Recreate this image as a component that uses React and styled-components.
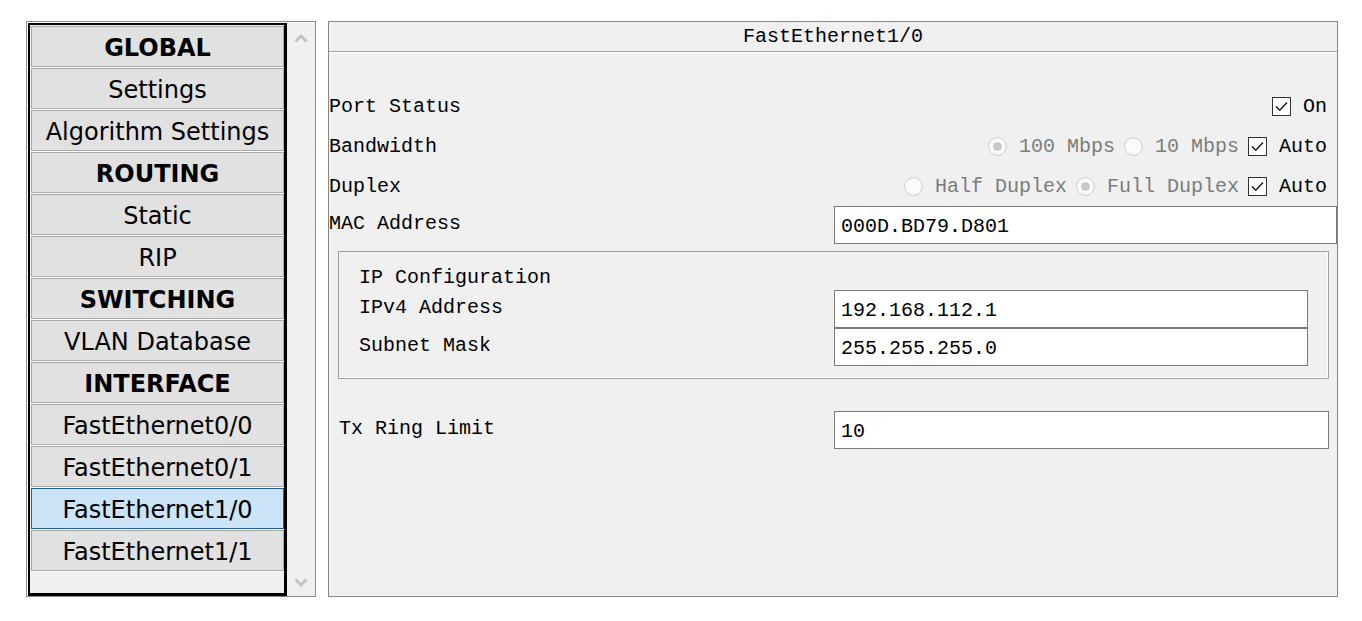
import React from "react";
import styled, { createGlobalStyle } from "styled-components";

const GlobalStyle = createGlobalStyle`
    html, body {
        margin: 0;
        background: #ffffff;
    }
    * {
        box-sizing: border-box;
    }
`;

const Page = styled.div`
    display: flex;
    gap: 12px;
    padding: 21px 0 0 26px;
`;

/* ---------- left navigation ---------- */

const NavBox = styled.div`
    display: flex;
    width: 290px;
    height: 576px;
    border: 1px solid #8a8a8a;
    background: #ffffff;
    padding: 1px 0 0 1px;
`;

const NavList = styled.div`
    width: 259px;
    display: flex;
    flex-direction: column;
    border-style: solid;
    border-color: #000;
    border-width: 2px 3px 3px 2px;
    background: #f0f0f0;
    padding: 1px 0 0 1px;
`;

const NavItem = styled.div`
    height: 41px;
    width: 253px;
    margin-bottom: 1px;
    display: flex;
    align-items: center;
    justify-content: center;
    padding-top: 3px;
    font-family: "DejaVu Sans", Verdana, sans-serif;
    font-size: 24px;
    font-weight: ${(p) => (p.$heading ? 700 : 400)};
    color: #000;
    background: ${(p) => (p.$active ? "#cce4f7" : "#e1e1e1")};
    border: 1px solid ${(p) => (p.$active ? "#1f5e9c" : "#a9a9a9")};
    box-shadow: 0 1px 0 #ffffff;
`;

const ScrollBar = styled.div`
    flex: 1;
    display: flex;
    flex-direction: column;
    justify-content: space-between;
    align-items: center;
    background: #f0f0f0;
    padding: 11px 0 9px 0;
`;

const Chevron = ({ down }) => (
    <svg width="14" height="9" viewBox="0 0 14 9">
        <path
            d={down ? "M1.5 1.5 L7 7 L12.5 1.5" : "M1.5 7.5 L7 2 L12.5 7.5"}
            stroke="#c3c3c3"
            strokeWidth="3"
            fill="none"
        />
    </svg>
);

/* ---------- right config panel ---------- */

const Panel = styled.div`
    width: 1010px;
    height: 576px;
    border: 1px solid #868686;
    background: #f0f0f0;
    font-family: "Liberation Mono", "Courier New", monospace;
    font-size: 20px;
    color: #000;
`;

const TitleBar = styled.div`
    height: 30px;
    line-height: 29px;
    text-align: center;
    border-bottom: 1px solid #a0a0a0;
    box-shadow: 0 1px 0 #ffffff;
`;

const Body = styled.div`
    padding-top: 34px;
    display: flex;
    flex-direction: column;
`;

const OptionRow = styled.div`
    height: 40px;
    display: flex;
    align-items: center;
    justify-content: space-between;
    padding: 1px 10px 0 0;
`;

const Label = styled.span`
    white-space: pre;
    transform: translateY(${(p) => p.$shift || 0}px);
`;

const Options = styled.div`
    display: flex;
    align-items: center;
`;

const Option = styled.div`
    display: flex;
    align-items: center;
    gap: 12px;
    margin-left: 9px;
    color: ${(p) => (p.$disabled ? "#7c7c7c" : "#000")};
    white-space: pre;
`;

const FieldRow = styled.div`
    display: flex;
    align-items: center;
    justify-content: space-between;
    margin: ${(p) => p.$margin || "0"};
`;

const Field = styled.div`
    width: ${(p) => p.$width}px;
    height: 38px;
    border: 1px solid #7a7a7a;
    background: #ffffff;
    padding: 3px 0 0 6px;
    display: flex;
    align-items: center;
    white-space: pre;
`;

const GroupBox = styled.div`
    margin: 7px 8px 0 9px;
    height: 128px;
    border: 1px solid #a0a0a0;
    box-shadow: inset -1px -1px 0 #ffffff;
    padding: 16px 20px 0 20px;
`;

const GroupTitle = styled.div`
    height: 20px;
    line-height: 20px;
    margin-bottom: 2px;
`;

const CheckBox = () => (
    <svg width="19" height="19" viewBox="0 0 19 19">
        <rect x="0.5" y="0.5" width="18" height="18" fill="#fff" stroke="#333" />
        <path d="M4 9.5 L7.8 13.2 L15 5.5" stroke="#222" strokeWidth="1.6" fill="none" />
    </svg>
);

const Radio = ({ checked }) => (
    <svg width="19" height="19" viewBox="0 0 20 20">
        <circle cx="10" cy="10" r="9.3" fill="#fbfbfb" stroke="#c9c9c9" />
        {checked && <circle cx="10" cy="10" r="4.6" fill="#c6c6c6" />}
    </svg>
);

const navItems = [
    { label: "GLOBAL", heading: true },
    { label: "Settings" },
    { label: "Algorithm Settings" },
    { label: "ROUTING", heading: true },
    { label: "Static" },
    { label: "RIP" },
    { label: "SWITCHING", heading: true },
    { label: "VLAN Database" },
    { label: "INTERFACE", heading: true },
    { label: "FastEthernet0/0" },
    { label: "FastEthernet0/1" },
    { label: "FastEthernet1/0", active: true },
    { label: "FastEthernet1/1" },
];

const App = () => {
    return (
        <>
            <GlobalStyle />
            <Page>
                <NavBox>
                    <NavList>
                        {navItems.map((item) => (
                            <NavItem
                                key={item.label}
                                $heading={item.heading}
                                $active={item.active}
                            >
                                {item.label}
                            </NavItem>
                        ))}
                    </NavList>
                    <ScrollBar>
                        <Chevron />
                        <Chevron down />
                    </ScrollBar>
                </NavBox>

                <Panel>
                    <TitleBar>FastEthernet1/0</TitleBar>
                    <Body>
                        <OptionRow>
                            <Label>Port Status</Label>
                            <Options>
                                <Option>
                                    <CheckBox />
                                    On
                                </Option>
                            </Options>
                        </OptionRow>
                        <OptionRow>
                            <Label>Bandwidth</Label>
                            <Options>
                                <Option $disabled>
                                    <Radio checked />
                                    100 Mbps
                                </Option>
                                <Option $disabled>
                                    <Radio />
                                    10 Mbps
                                </Option>
                                <Option>
                                    <CheckBox />
                                    Auto
                                </Option>
                            </Options>
                        </OptionRow>
                        <OptionRow>
                            <Label>Duplex</Label>
                            <Options>
                                <Option $disabled>
                                    <Radio />
                                    Half Duplex
                                </Option>
                                <Option $disabled>
                                    <Radio checked />
                                    Full Duplex
                                </Option>
                                <Option>
                                    <CheckBox />
                                    Auto
                                </Option>
                            </Options>
                        </OptionRow>

                        <FieldRow>
                            <Label $shift={-2}>MAC Address</Label>
                            <Field $width={503}>000D.BD79.D801</Field>
                        </FieldRow>

                        <GroupBox>
                            <GroupTitle>IP Configuration</GroupTitle>
                            <FieldRow>
                                <Label $shift={-2}>IPv4 Address</Label>
                                <Field $width={474}>192.168.112.1</Field>
                            </FieldRow>
                            <FieldRow>
                                <Label $shift={-2}>Subnet Mask</Label>
                                <Field $width={474}>255.255.255.0</Field>
                            </FieldRow>
                        </GroupBox>

                        <FieldRow $margin="32px 8px 0 10px">
                            <Label $shift={-2}>Tx Ring Limit</Label>
                            <Field $width={495}>10</Field>
                        </FieldRow>
                    </Body>
                </Panel>
            </Page>
        </>
    );
};

export default App;
